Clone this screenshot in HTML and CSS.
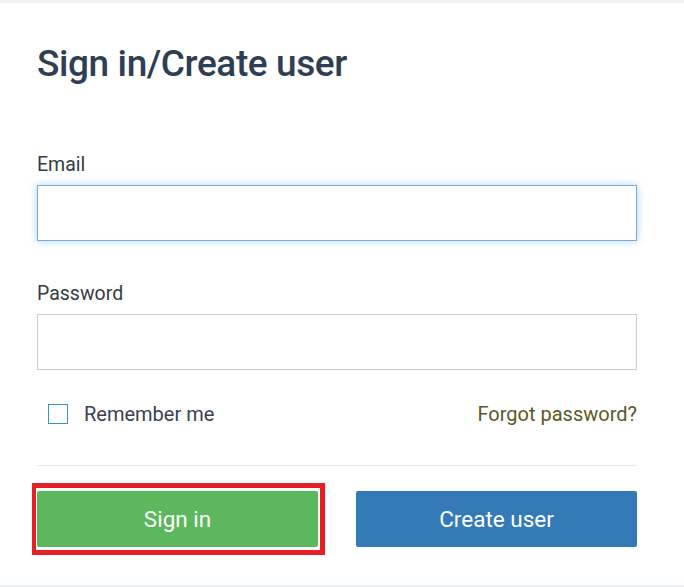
FILE: index.html
```html
<!DOCTYPE html>
<html>
<head>
<meta charset="utf-8">
<link rel="stylesheet" href="styles.css">
</head>
<body>
<div class="card">
  <h1 class="title">Sign in/Create user</h1>
  <label class="label label-email">Email</label>
  <div class="input input-focus"></div>
  <label class="label label-pass">Password</label>
  <div class="input"></div>
  <div class="row">
    <div class="remember"><span class="checkbox"></span><span class="remember-text">Remember me</span></div>
    <a class="forgot">Forgot password?</a>
  </div>
  <div class="divider"></div>
  <div class="buttons">
    <div class="btn-wrap">
      <div class="btn btn-green">Sign in</div>
      <span class="highlight"></span>
    </div>
    <div class="btn-wrap">
      <div class="btn btn-blue">Create user</div>
    </div>
  </div>
</div>
</body>
</html>
```

FILE: styles.css
```css
html, body {
  margin: 0;
  padding: 0;
}
body {
  background: #eef2f5;
  font-family: Roboto, "Liberation Sans", Arial, sans-serif;
  width: 684px;
  height: 587px;
  overflow: hidden;
  padding-top: 3px;
  box-sizing: border-box;
}
.card {
  background: #ffffff;
  height: 582px;
  box-sizing: border-box;
  padding: 39px 47px 0 37px;
  display: flex;
  flex-direction: column;
}
.title {
  margin: 0;
  font-size: 37px;
  line-height: 44px;
  font-weight: 500;
  color: #2f3f53;
  letter-spacing: -0.4px;
}
.label {
  display: block;
  font-size: 19.5px;
  line-height: 25px;
  color: #363b42;
  margin-bottom: 8px;
}
.label-email {
  margin-top: 66px;
}
.label-pass {
  margin-top: 40px;
}
.input {
  height: 56px;
  box-sizing: border-box;
  border: 1px solid #cccccc;
  background: #fff;
}
.input-focus {
  border-color: #74afdc;
  box-shadow: 0 0 8px rgba(102, 175, 233, 0.55);
}
.row {
  margin-top: 32px;
  height: 24px;
  display: flex;
  align-items: center;
  justify-content: space-between;
}
.remember {
  display: flex;
  align-items: center;
}
.checkbox {
  width: 20px;
  height: 20px;
  box-sizing: border-box;
  border: 1px solid #3c97ad;
  margin-left: 11px;
  margin-right: 16px;
}
.remember-text {
  font-size: 20px;
  color: #3a4250;
}
.forgot {
  font-size: 20px;
  color: #5b5826;
}
.divider {
  margin-top: 39px;
  height: 1px;
  background: #e8e8e8;
}
.buttons {
  margin-top: 25px;
  display: flex;
  gap: 38px;
}
.btn-wrap {
  flex: 1;
  position: relative;
}
.btn {
  height: 56px;
  border-radius: 2px;
  color: #ffffff;
  font-size: 22.5px;
  display: flex;
  align-items: center;
  justify-content: center;
}
.btn-green {
  background: #5cb85c;
}
.btn-blue {
  background: #337ab7;
}
.highlight {
  position: absolute;
  top: -8px;
  left: -5px;
  right: -7px;
  bottom: -8px;
  border: 5px solid #e41f26;
  border-left-width: 4px;
}
```
